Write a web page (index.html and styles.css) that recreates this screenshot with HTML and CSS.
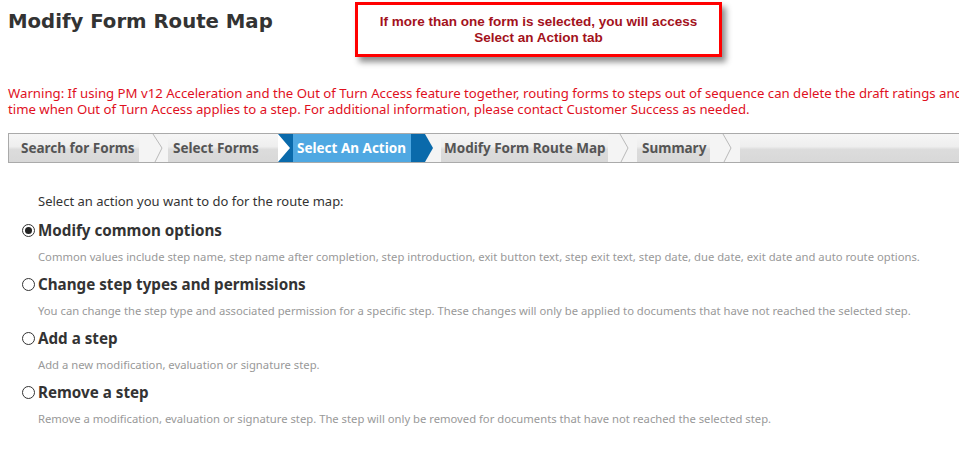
FILE: index.html
```html
<!DOCTYPE html>
<html lang="en">

<head>
  <meta charset="UTF-8">
  <title>Modify Form Route Map</title>
  <link rel="stylesheet" href="styles.css">
</head>

<body>
  <div class="page">
    <h1 class="title">Modify Form Route Map</h1>

    <!-- annotation over the screenshot -->
    <div class="callout">
      If more than one form is selected, you will access<br>
      Select an Action tab
    </div>

    <p class="warning">
      Warning: If using PM v12 Acceleration and the Out of Turn Access feature together, routing forms to steps out of sequence can delete the draft ratings and comments at the<br>
      time when Out of Turn Access applies to a step. For additional information, please contact Customer Success as needed.
    </p>

    <div class="steps">
      <div class="step step-search">Search for Forms</div>
      <svg class="sep" width="29" height="28" viewBox="0 0 29 28">
        <rect width="29" height="28" fill="#f4f4f4" />
        <polyline points="14,0 23,14 16,28" fill="none" stroke="#b9b9b9" stroke-width="1" />
      </svg>
      <div class="step step-select">Select Forms</div>
      <svg class="sep" width="15" height="28" viewBox="0 0 15 28">
        <polygon points="0,0 15,0 15,28 0,28 12,14" fill="#0a6aab" />
      </svg>
      <div class="step active">Select An Action</div>
      <svg class="sep" width="30" height="28" viewBox="0 0 30 28">
        <rect width="30" height="28" fill="#f4f4f4" />
        <polygon points="0,0 14,0 22,14 14,28 0,28" fill="#0a6aab" />
      </svg>
      <div class="step step-modify">Modify Form Route Map</div>
      <svg class="sep" width="29" height="28" viewBox="0 0 29 28">
        <rect width="29" height="28" fill="#f4f4f4" />
        <polyline points="12,0 20,14 13,28" fill="none" stroke="#b9b9b9" stroke-width="1" />
      </svg>
      <div class="step step-summary">Summary</div>
      <svg class="sep" width="30" height="28" viewBox="0 0 30 28">
        <rect width="30" height="28" fill="#f4f4f4" />
        <polyline points="13,0 21,14 14,28" fill="none" stroke="#b9b9b9" stroke-width="1" />
      </svg>
      <div class="step rest"></div>
    </div>

    <div class="actions">
      <p class="intro">Select an action you want to do for the route map:</p>

      <div class="option">
        <div class="option-head">
          <span class="radio checked"></span>
          <span class="option-label">Modify common options</span>
        </div>
        <p class="option-desc">Common values include step name, step name after completion, step introduction, exit button text, step exit text, step date, due date, exit date and auto route options.</p>
      </div>

      <div class="option">
        <div class="option-head">
          <span class="radio"></span>
          <span class="option-label">Change step types and permissions</span>
        </div>
        <p class="option-desc">You can change the step type and associated permission for a specific step. These changes will only be applied to documents that have not reached the selected step.</p>
      </div>

      <div class="option">
        <div class="option-head">
          <span class="radio"></span>
          <span class="option-label">Add a step</span>
        </div>
        <p class="option-desc">Add a new modification, evaluation or signature step.</p>
      </div>

      <div class="option">
        <div class="option-head">
          <span class="radio"></span>
          <span class="option-label">Remove a step</span>
        </div>
        <p class="option-desc">Remove a modification, evaluation or signature step. The step will only be removed for documents that have not reached the selected step.</p>
      </div>
    </div>
  </div>
</body>

</html>
```

FILE: styles.css
```css
body {
  margin: 0;
  padding: 0;
  font-family: 'Noto Sans', sans-serif;
  background: #fff;
  overflow: hidden;
}

.page {
  position: relative;
  padding-left: 8px;
  width: 1100px;
}

.title {
  margin: 0;
  padding-top: 10px;
  height: 75px;
  font-family: 'DejaVu Sans', sans-serif;
  font-size: 19.7px;
  font-weight: bold;
  color: #333;
}

/* red annotation box */
.callout {
  position: absolute;
  left: 355px;
  top: 2px;
  width: 361px;
  height: 49px;
  border: 3px solid #ff0000;
  box-shadow: 4px 5px 6px rgba(0, 0, 0, 0.45);
  background: #fff;
  font-family: 'Liberation Sans', sans-serif;
  font-size: 13.5px;
  font-weight: bold;
  line-height: 16px;
  color: #a3121c;
  text-align: center;
  display: flex;
  align-items: center;
  justify-content: center;
}

.warning {
  margin: 0;
  font-size: 13.2px;
  line-height: 16px;
  color: #e0101e;
  white-space: nowrap;
}

.steps {
  display: flex;
  margin-top: 16px;
  height: 28px;
  border: 1px solid #aaa;
}

.step {
  display: flex;
  align-items: center;
  flex-shrink: 0;
  font-size: 13.5px;
  font-weight: bold;
  color: #555;
  background: linear-gradient(#f6f6f6, #eeeeee 45%, #dcdcdc 55%, #d8d8d8);
}

.step-search {
  width: 118px;
  padding-left: 12px;
}

.step-select {
  width: 105px;
  padding-left: 5px;
}

.step.active {
  width: 114px;
  padding-left: 4px;
  background: #4fa8e2;
  color: #fff;
}

.step-modify {
  width: 164px;
  padding-left: 3px;
}

.step-summary {
  width: 68px;
  padding-left: 5px;
}

.step.rest {
  flex-grow: 1;
}

.sep {
  display: block;
  flex-shrink: 0;
}

.actions {
  padding-top: 29px;
}

.intro {
  margin: 0 0 10px 30px;
  font-size: 13px;
  color: #333;
}

.option {
  margin-left: 14px;
  height: 54px;
}

.option-head {
  display: flex;
  align-items: center;
  gap: 3px;
}

.radio {
  width: 11px;
  height: 11px;
  border: 1px solid #333;
  border-radius: 50%;
  display: flex;
  align-items: center;
  justify-content: center;
}

.radio.checked::after {
  content: "";
  width: 7px;
  height: 7px;
  border-radius: 50%;
  background: #222;
}

.option-label {
  font-size: 15.2px;
  font-weight: bold;
  color: #333;
}

.option-desc {
  margin: 9px 0 0 16px;
  font-size: 11.25px;
  color: #999;
}
```
